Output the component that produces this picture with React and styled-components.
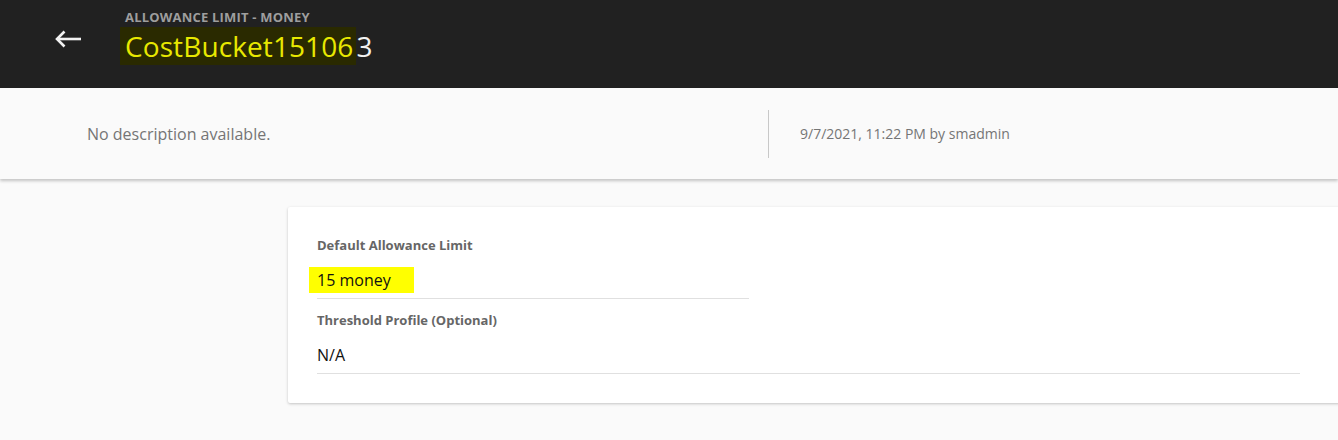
import styled, { createGlobalStyle } from 'styled-components';

const GlobalStyle = createGlobalStyle`
  html, body {
    margin: 0;
    padding: 0;
    background: #fafafa;
    overflow: hidden;
    font-family: "Open Sans", "Noto Sans", sans-serif;
  }
`;

const Page = styled.div`
  width: 1338px;
  height: 440px;
  background: #fafafa;
  overflow: hidden;
`;

const Header = styled.header`
  height: 88px;
  background: #212121;
  display: flex;
  align-items: flex-start;
  box-sizing: border-box;
  padding-left: 54px;
`;

const BackButton = styled.button`
  background: none;
  border: 0;
  padding: 0;
  margin-top: 29px;
  width: 30px;
  height: 20px;
  display: flex;
  align-items: center;
  cursor: pointer;
  color: #f2f2f2;
`;

const TitleBlock = styled.div`
  margin-left: 41px;
  display: flex;
  flex-direction: column;
`;

const Overline = styled.div`
  margin-top: 9px;
  font-size: 13px;
  font-weight: 700;
  letter-spacing: 0.2px;
  color: #9e9e9e;
  line-height: 17px;
`;

const Title = styled.h1`
  margin: 1px 0 0;
  font-size: 28px;
  font-weight: 400;
  letter-spacing: 0.1px;
  line-height: 38px;
  color: #f2f2f2;
`;

const Mark = styled.span`
  background: #2a2a00;
  color: #e8e800;
  padding: 0 3px 0 5px;
  margin-left: -5px;
`;

const InfoBand = styled.section`
  height: 91px;
  background: #fafafa;
  box-shadow: 0 2px 3px rgba(0, 0, 0, 0.22);
  display: flex;
  align-items: center;
  position: relative;
`;

const Description = styled.div`
  width: 681px;
  padding-left: 87px;
  font-size: 16px;
  color: #757575;
`;

const Divider = styled.div`
  width: 1px;
  height: 48px;
  background: #c8c8c8;
`;

const Meta = styled.div`
  padding-left: 31px;
  font-size: 14px;
  color: #757575;
`;

const Content = styled.main`
  padding: 28px 0 0 288px;
`;

const Card = styled.div`
  width: 1100px;
  height: 196px;
  background: #fff;
  border-radius: 2px;
  box-shadow: 0 1px 3px rgba(0, 0, 0, 0.22);
  box-sizing: border-box;
  padding: 29px 0 0 29px;
`;

const Field = styled.div`
  width: ${({ $width }) => $width}px;
  border-bottom: 1px solid #e0e0e0;
  margin-bottom: 12px;
`;

const Label = styled.div`
  font-size: 13px;
  font-weight: 700;
  color: #666;
  line-height: 18px;
`;

const Value = styled.div`
  margin-top: 16px;
  height: 28px;
  font-size: 16px;
  line-height: 20px;
  color: #111;
  display: flex;
  align-items: flex-start;
`;

const Highlight = styled.span`
  background: #ffff00;
  padding: 3px 23px 3px 8px;
  margin-left: -8px;
  margin-top: -3px;
  line-height: 20px;
`;

export default function App() {
  return (
    <Page>
      <GlobalStyle />
      <Header>
        <BackButton aria-label="Back">
          <svg width="28" height="18" viewBox="0 0 28 18" fill="none" stroke="currentColor" strokeWidth="2.6">
            <path d="M27 9H3" />
            <path d="M10.5 1.5L3 9l7.5 7.5" />
          </svg>
        </BackButton>
        <TitleBlock>
          <Overline>ALLOWANCE LIMIT - MONEY</Overline>
          <Title><Mark>CostBucket15106</Mark>3</Title>
        </TitleBlock>
      </Header>
      <InfoBand>
        <Description>No description available.</Description>
        <Divider />
        <Meta>9/7/2021, 11:22 PM by smadmin</Meta>
      </InfoBand>
      <Content>
        <Card>
          <Field $width={432}>
            <Label>Default Allowance Limit</Label>
            <Value><Highlight>15 money</Highlight></Value>
          </Field>
          <Field $width={983}>
            <Label>Threshold Profile (Optional)</Label>
            <Value>N/A</Value>
          </Field>
        </Card>
      </Content>
    </Page>
  );
}
